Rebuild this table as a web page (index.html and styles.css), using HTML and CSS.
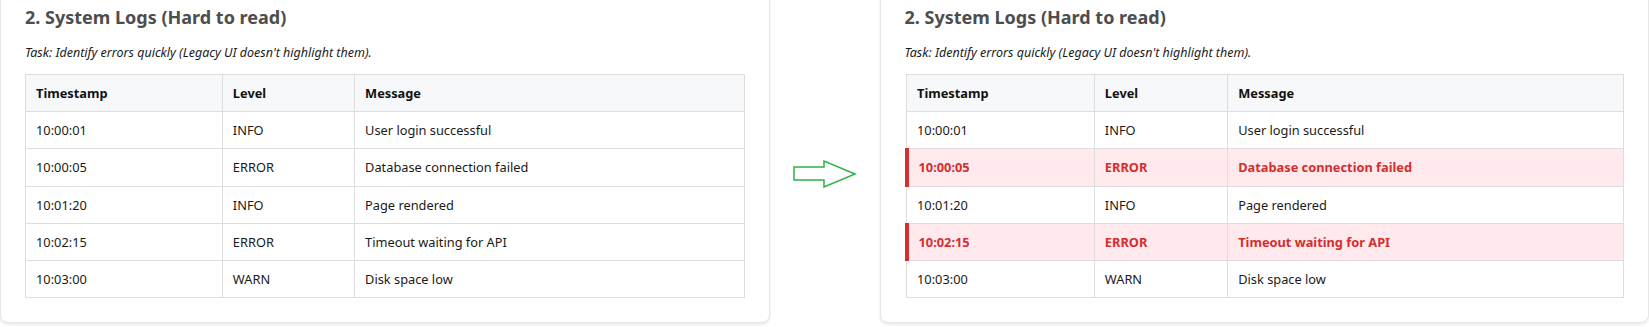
FILE: index.html
```html
<!DOCTYPE html>
<html lang="en">
<head>
<meta charset="utf-8">
<title>System Logs</title>
<link rel="stylesheet" href="styles.css">
</head>
<body>
<div class="compare">
  <section class="card">
    <h2 class="card-title">2. System Logs (Hard to read)</h2>
    <p class="task">Task: Identify errors quickly (Legacy UI doesn't highlight them).</p>
    <table class="logs logs-legacy">
      <thead>
        <tr><th>Timestamp</th><th>Level</th><th>Message</th></tr>
      </thead>
      <tbody>
        <tr><td>10:00:01</td><td>INFO</td><td>User login successful</td></tr>
        <tr><td>10:00:05</td><td>ERROR</td><td>Database connection failed</td></tr>
        <tr><td>10:01:20</td><td>INFO</td><td>Page rendered</td></tr>
        <tr><td>10:02:15</td><td>ERROR</td><td>Timeout waiting for API</td></tr>
        <tr><td>10:03:00</td><td>WARN</td><td>Disk space low</td></tr>
      </tbody>
    </table>
  </section>

  <div class="arrow">
    <svg width="64" height="28" viewBox="0 0 64 28" aria-hidden="true">
      <polygon points="1,7 31,7 31,1 62,14 31,27 31,20 1,20" fill="none" stroke="#2db24d" stroke-width="1.5" stroke-linejoin="miter"/>
    </svg>
  </div>

  <section class="card">
    <h2 class="card-title">2. System Logs (Hard to read)</h2>
    <p class="task">Task: Identify errors quickly (Legacy UI doesn't highlight them).</p>
    <table class="logs logs-modern">
      <thead>
        <tr><th>Timestamp</th><th>Level</th><th>Message</th></tr>
      </thead>
      <tbody>
        <tr><td>10:00:01</td><td>INFO</td><td>User login successful</td></tr>
        <tr class="row-error"><td>10:00:05</td><td>ERROR</td><td>Database connection failed</td></tr>
        <tr><td>10:01:20</td><td>INFO</td><td>Page rendered</td></tr>
        <tr class="row-error"><td>10:02:15</td><td>ERROR</td><td>Timeout waiting for API</td></tr>
        <tr><td>10:03:00</td><td>WARN</td><td>Disk space low</td></tr>
      </tbody>
    </table>
  </section>
</div>
</body>
</html>
```

FILE: styles.css
```css
html, body {
  margin: 0;
  padding: 0;
  background: #ffffff;
}

body {
  font-family: "Segoe UI", "Noto Sans", "Open Sans", sans-serif;
  color: #1a1a1a;
  overflow: hidden;
}

.compare {
  display: grid;
  grid-template-columns: 1fr 110px 1fr;
  align-items: stretch;
  margin-top: -20px;
}

.card {
  background: #ffffff;
  border: 1px solid #e6e6e6;
  border-radius: 8px;
  box-shadow: 0 2px 3px rgba(0, 0, 0, 0.08);
  padding: 24px 24px 24px 24px;
  margin-bottom: 4px;
}

.card-title {
  margin: 0;
  font-size: 18px;
  line-height: 25px;
  font-weight: 700;
  color: #4d4d4d;
}

.task {
  margin: 15px 0 13px;
  font-size: 12.5px;
  line-height: 16px;
  font-style: italic;
  color: #1a1a1a;
}

.logs {
  width: 100%;
  border-collapse: collapse;
  font-size: 12.8px;
  line-height: 16.2px;
}

.logs th,
.logs td {
  border: 1px solid #dedede;
  padding: 10px 10px;
  text-align: left;
  vertical-align: middle;
}

.logs th {
  background: #f7f8fa;
  font-weight: 700;
  color: #111111;
}

.logs td {
  color: #1a1a1a;
}

.logs-legacy th:nth-child(1) { width: 27.4%; }
.logs-legacy th:nth-child(2) { width: 18.4%; }
.logs-modern th:nth-child(1) { width: 26.2%; }
.logs-modern th:nth-child(2) { width: 18.6%; }

.row-error td {
  background: #ffe9ec;
  color: #d32f2f;
  font-weight: 700;
}

.row-error td:first-child {
  border-left: 4px solid #d32f2f;
}

.arrow {
  display: flex;
  align-items: center;
  justify-content: center;
  padding-top: 40px;
}

.arrow svg {
  display: block;
}
```
